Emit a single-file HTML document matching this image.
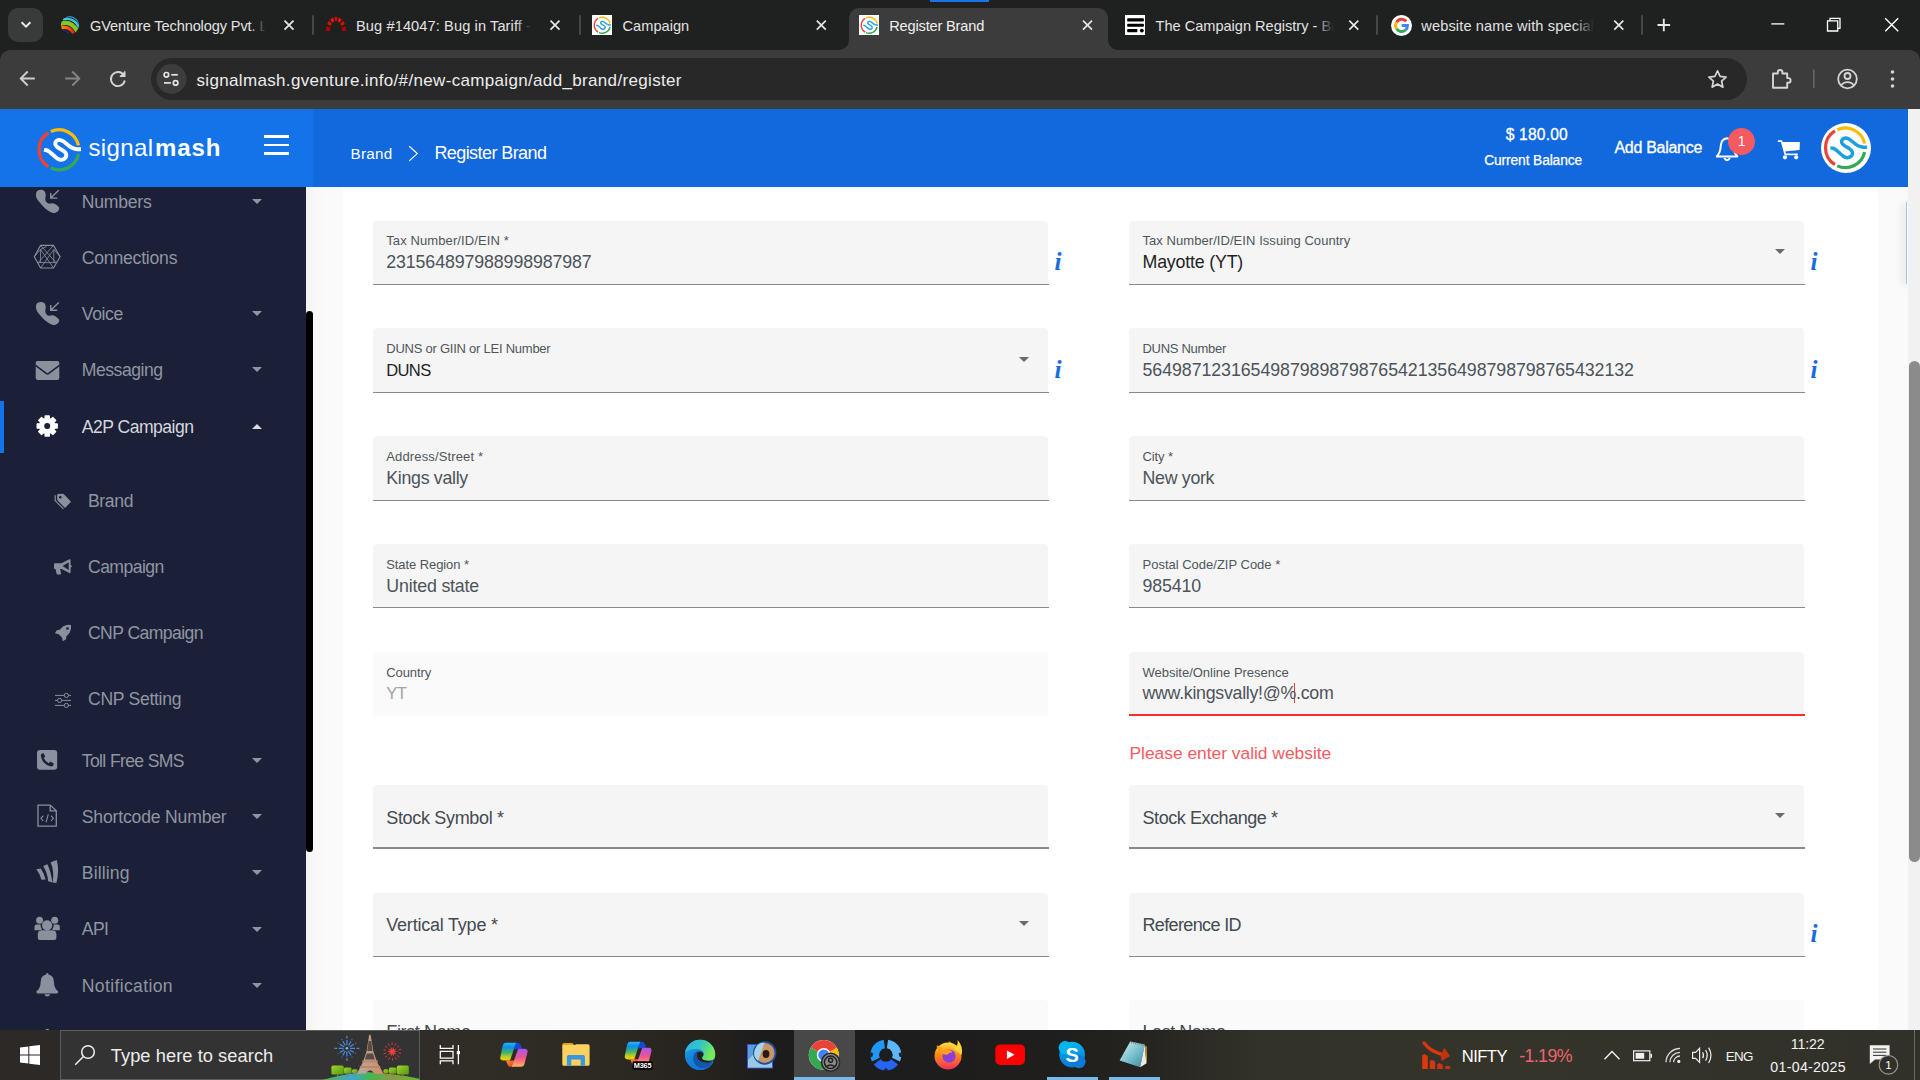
<!DOCTYPE html>
<html><head><meta charset="utf-8"><title>Register Brand</title>
<style>
*{box-sizing:border-box;margin:0;padding:0}
html,body{width:1920px;height:1080px;overflow:hidden;background:#fafafa;font-family:"Liberation Sans",sans-serif}
#root{position:relative;width:1920px;height:1080px;overflow:hidden}
#root>div,#root>svg,#root>span{position:absolute}
.tx{position:absolute;white-space:nowrap;line-height:1;display:block}
#tabbar{left:0;top:0;width:1920px;height:64px;background:#1f2020}
#toolbar{left:0;top:50px;width:1920px;height:58.5px;background:#3c3c3c;border-radius:10px 10px 0 0}
#acttab{left:849px;top:8px;width:258.5px;height:42px;background:#3c3c3c;border-radius:10px 10px 0 0}
.sep{top:14.5px;width:2px;height:20px;background:#474747;border-radius:1px}
#urlpill{left:151px;top:58px;width:1596px;height:42px;border-radius:21px;background:#282828}
#hdrL{left:0;top:108.5px;width:313px;height:78.5px;background:#1473e8}
#hdrR{left:313px;top:108.5px;width:1594.5px;height:78.5px;background:#1268dd}
#side{left:0;top:187px;width:306px;height:843px;background:#1b1f37}
#sidescroll{left:306px;top:187px;width:37px;height:843px;background:linear-gradient(90deg,#f1f1f1 0,#f8f8f8 8px,#fafafa 20px)}
#sidethumb{left:306.3px;top:311px;width:6.7px;height:541px;background:#000;border-radius:3.5px}
#actbar{left:0;top:401px;width:4px;height:51.5px;background:#1473e8}
.car{width:0;height:0;border-left:5.2px solid transparent;border-right:5.2px solid transparent;border-top:5.2px solid #8f96a1}
.car.up{border-top:0;border-bottom:5.2px solid #d8dadc}
#card{left:343px;top:187px;width:1535px;height:843px;background:#fff}
.f{width:675px;background:#f5f5f5;border-radius:4px 4px 0 0}
.f.dis{background:#fafafa}
.dd{width:0;height:0;border-left:5.9px solid transparent;border-right:5.9px solid transparent;border-top:5.9px solid #6a6a6a}
#rgutter{left:1878px;top:187px;width:29.5px;height:843px;background:#fafafa}
#pagescroll{left:1907.8px;top:108.5px;width:12.2px;height:921.5px;background:#f1f1f1}
#pagethumb{left:1908.9px;top:360.5px;width:11.5px;height:501.3px;background:#8b8b8b;border-radius:5.7px}
#task{left:0;top:1029.8px;width:1920px;height:50.2px;background:linear-gradient(90deg,#2d2927 0,#2e2a27 240px,#302d27 480px,#2c2923 620px,#25221e 715px,#1c1c1c 765px,#1d1d1d 900px,#1f1e1c 1050px,#262420 1150px,#32322a 1260px,#34342b 1500px,#31312a 1920px)}
#sbox{left:60px;top:1030.2px;width:359.8px;height:49.8px;background:#333;border:1.1px solid #5c5c5c}
#chromehl{left:794.3px;top:1030px;width:60.7px;height:50px;background:#484848}
.ul{top:1077px;height:3px;background:#76b9ed}
</style></head>
<body><div id="root">
<div id="tabbar"></div>
<div id="toolbar"></div>
<div id="acttab"></div>
<div id="urlpill"></div>
<div style="left:929.5px;top:0;width:59px;height:1.5px;background:#1a73e8"></div>
<div style="left:8px;top:8px;width:35px;height:34px;border-radius:10px;background:#393a3a"></div>
<svg style="left:19px;top:19px" width="14" height="12" viewBox="0 0 14 12"><path d="M2.6 3.2 L7 7.6 L11.4 3.2" fill="none" stroke="#e8e8e8" stroke-width="2"/></svg>
<!-- bottom outward curves of active tab -->
<svg style="left:839px;top:40px" width="10" height="10" viewBox="0 0 10 10"><path d="M10 0 V10 H0 A10 10 0 0 0 10 0Z" fill="#3c3c3c"/></svg>
<svg style="left:1107.5px;top:40px" width="10" height="10" viewBox="0 0 10 10"><path d="M0 0 V10 H10 A10 10 0 0 1 0 0Z" fill="#3c3c3c"/></svg>
<div class="sep" style="left:311.5px"></div><div class="sep" style="left:578.5px"></div><div class="sep" style="left:1376.3px"></div><div class="sep" style="left:1641.3px"></div>
<!-- close X -->
<svg style="left:0;top:0" width="1920" height="50" viewBox="0 0 1920 50"><g stroke="#e6e6e6" stroke-width="1.7" fill="none">
<path d="M284.5 20.7l9 9m0-9l-9 9"/><path d="M550.5 20.7l9 9m0-9l-9 9"/><path d="M816.8 20.7l9 9m0-9l-9 9"/><path d="M1083 20.7l9 9m0-9l-9 9"/><path d="M1349.3 20.7l9 9m0-9l-9 9"/><path d="M1614.3 20.7l9 9m0-9l-9 9"/>
<path d="M1657.5 25h12.6M1663.8 18.7v12.6" stroke-width="1.9"/>
<path d="M1771.3 23.9h13" stroke-width="1.3" stroke="#fff"/>
<path d="M1827.5 20.8h10.2v10.2h-10.2z M1830 20.6v-2.3h10v10h-2.2" stroke-width="1.3" stroke="#fff"/>
<path d="M1885.2 18.2l13 13m0-13l-13 13" stroke-width="1.4" stroke="#fff"/>
</g></svg>
<!-- favicons -->
<svg style="left:59.2px;top:14px" width="22" height="22" viewBox="-11 -11 22 22"><defs><clipPath id="gvc"><circle r="9"/></clipPath><linearGradient id="gvr" x1="0" y1="0" x2="1" y2="0"><stop offset="0" stop-color="#ff8a14"/><stop offset="1" stop-color="#f00a0a"/></linearGradient></defs>
<g clip-path="url(#gvc)" fill="none" transform="rotate(24)"><path d="M-7 -5.500 Q1 -11.500 9 -4" stroke="#2a9cc4" stroke-width="1.200"/><path d="M-9 -2 Q0 -9.500 10 -1" stroke="#3fc6ea" stroke-width="2.300"/><path d="M-9.500 3.500 Q-2 -5.500 10 3" stroke="#86c81e" stroke-width="4.200"/><path d="M-7 6.500 Q-1 0.500 9 7.200" stroke="url(#gvr)" stroke-width="3"/><path d="M-5 9 Q0 5.500 7 10" stroke="#1c2a78" stroke-width="1.500"/></g></svg>
<svg style="left:320px;top:12px" width="32" height="24" viewBox="320 12 32 24"><path d="M325.80 31.10 L326.51 25.89 L330.23 27.43 L329.80 31.10 Z" fill="#b40000"/><path d="M327.16 24.02 L329.07 20.68 L331.79 23.76 L330.63 26.11 Z" fill="#e00800"/><path d="M330.24 19.38 L333.01 17.52 L334.18 21.54 L332.50 22.85 Z" fill="#f21200"/><path d="M334.46 17.06 L337.54 17.06 L336.93 21.21 L335.07 21.21 Z" fill="#de0010"/><path d="M338.99 17.52 L341.76 19.38 L339.50 22.85 L337.82 21.54 Z" fill="#f21200"/><path d="M342.93 20.68 L344.84 24.02 L341.37 26.11 L340.21 23.76 Z" fill="#e00800"/><path d="M345.49 25.89 L346.20 31.10 L342.20 31.10 L341.77 27.43 Z" fill="#b40000"/></svg>
<svg style="left:591.8px;top:14.6px" width="20.5" height="20.5" viewBox="0 0 20.5 20.5"><rect width="20.5" height="20.5" rx="0.6" fill="#fff"/><g fill="none"><path d="M6.07 17.07 A8.00 8.00 0 0 1 6.07 3.43" stroke="#ea4335" stroke-width="1.40" stroke-linecap="butt"/><path d="M7.00 2.94 A8.00 8.00 0 0 1 18.06 8.52" stroke="#fbbc05" stroke-width="1.40" stroke-linecap="butt"/><path d="M7.00 17.56 A8.00 8.00 0 0 0 18.06 11.98" stroke="#34a853" stroke-width="1.40" stroke-linecap="butt"/><path d="M4.25 10.25 C4.45 10.29 5.05 10.32 5.45 10.49 C5.85 10.66 6.25 10.95 6.65 11.25 C7.05 11.55 7.45 11.94 7.85 12.29 C8.25 12.64 8.68 13.04 9.05 13.33 C9.42 13.62 9.73 13.86 10.05 14.01 C10.37 14.16 10.64 14.24 10.97 14.25 C11.30 14.26 11.74 14.20 12.05 14.05 C12.36 13.90 12.66 13.66 12.85 13.37 C13.04 13.08 13.18 12.66 13.17 12.33 C13.16 12.00 13.02 11.68 12.77 11.37 C12.52 11.06 12.00 10.70 11.65 10.45 C11.30 10.20 11.00 10.07 10.65 9.85 C10.30 9.63 9.86 9.38 9.57 9.13 C9.28 8.88 9.02 8.60 8.89 8.33 C8.76 8.06 8.72 7.79 8.77 7.53 C8.82 7.27 8.97 6.96 9.17 6.77 C9.37 6.58 9.69 6.44 9.97 6.37 C10.25 6.30 10.54 6.30 10.85 6.37 C11.16 6.44 11.48 6.59 11.85 6.81 C12.22 7.03 12.65 7.38 13.05 7.69 C13.45 8.00 13.85 8.36 14.25 8.65 C14.65 8.94 15.05 9.21 15.45 9.41 C15.85 9.61 16.25 9.75 16.65 9.85 C17.05 9.95 17.45 9.98 17.85 10.01 C18.25 10.04 18.85 10.04 19.05 10.05" stroke="#2ea3e0" stroke-width="1.50"/></g></svg>
<svg style="left:858.8px;top:14.6px" width="20.5" height="20.5" viewBox="0 0 20.5 20.5"><rect width="20.5" height="20.5" rx="0.6" fill="#fff"/><g fill="none"><path d="M6.07 17.07 A8.00 8.00 0 0 1 6.07 3.43" stroke="#ea4335" stroke-width="1.40" stroke-linecap="butt"/><path d="M7.00 2.94 A8.00 8.00 0 0 1 18.06 8.52" stroke="#fbbc05" stroke-width="1.40" stroke-linecap="butt"/><path d="M7.00 17.56 A8.00 8.00 0 0 0 18.06 11.98" stroke="#34a853" stroke-width="1.40" stroke-linecap="butt"/><path d="M4.25 10.25 C4.45 10.29 5.05 10.32 5.45 10.49 C5.85 10.66 6.25 10.95 6.65 11.25 C7.05 11.55 7.45 11.94 7.85 12.29 C8.25 12.64 8.68 13.04 9.05 13.33 C9.42 13.62 9.73 13.86 10.05 14.01 C10.37 14.16 10.64 14.24 10.97 14.25 C11.30 14.26 11.74 14.20 12.05 14.05 C12.36 13.90 12.66 13.66 12.85 13.37 C13.04 13.08 13.18 12.66 13.17 12.33 C13.16 12.00 13.02 11.68 12.77 11.37 C12.52 11.06 12.00 10.70 11.65 10.45 C11.30 10.20 11.00 10.07 10.65 9.85 C10.30 9.63 9.86 9.38 9.57 9.13 C9.28 8.88 9.02 8.60 8.89 8.33 C8.76 8.06 8.72 7.79 8.77 7.53 C8.82 7.27 8.97 6.96 9.17 6.77 C9.37 6.58 9.69 6.44 9.97 6.37 C10.25 6.30 10.54 6.30 10.85 6.37 C11.16 6.44 11.48 6.59 11.85 6.81 C12.22 7.03 12.65 7.38 13.05 7.69 C13.45 8.00 13.85 8.36 14.25 8.65 C14.65 8.94 15.05 9.21 15.45 9.41 C15.85 9.61 16.25 9.75 16.65 9.85 C17.05 9.95 17.45 9.98 17.85 10.01 C18.25 10.04 18.85 10.04 19.05 10.05" stroke="#2ea3e0" stroke-width="1.50"/></g></svg>
<svg style="left:1124.9px;top:14.9px" width="20.2" height="20.2" viewBox="0 0 20.2 20.2"><rect width="20.2" height="20.2" fill="#fff"/><g fill="#000"><rect x="2.2" y="3.3" width="16.700" height="3.300" rx=".8"/><rect x="2.2" y="8.700" width="16.700" height="3.100" rx=".8"/><rect x="2.2" y="14" width="10.200" height="3.200" rx=".8"/><circle cx="16.850" cy="15.600" r="1.950"/></g></svg>
<svg style="left:1390.5px;top:14.5px" width="21" height="21" viewBox="0 0 21 21"><circle cx="10.5" cy="10.5" r="10.5" fill="#fff"/>
<g fill="none" stroke-width="2.9"><path d="M15.3 6.3 A6 6 0 0 0 5.6 7.2" stroke="#ea4335"/><path d="M5.6 7.2 A6 6 0 0 0 5.6 13.8" stroke="#fbbc05"/><path d="M5.6 13.8 A6 6 0 0 0 14.6 15" stroke="#34a853"/><path d="M14.6 15 A6 6 0 0 0 16.5 10.5 H10.7" stroke="#4285f4"/></g></svg>
<!-- toolbar icons -->
<svg style="left:0;top:50px" width="1920" height="58" viewBox="0 50 1920 58"><g fill="none" stroke="#d5d5d5" stroke-width="1.9">
<path d="M34.800 78.500H21.300M27.700 71.500L20.700 78.500l7 7" stroke="#cdcdcd"/>
<path d="M65.200 78.500h13.500M72.300 71.500L79.300 78.500l-7 7" stroke="#858585"/>
<path d="M123.800 75.200 A7 7 0 1 0 124.800 80.500" /><path d="M124.800 71.200v5h-5" fill="#d5d5d5" stroke-width="1.4"/>
<path d="M1717.500 70.800l2.600 5.600 6 .7-4.500 4.100 1.300 6-5.400-3.100-5.400 3.100 1.300-6-4.500-4.100 6-.7z" stroke-width="1.7" stroke-linejoin="round"/>
<path d="M1773 73.500h4.800v-1.200a2.300 2.300 0 0 1 4.600 0v1.200h4.800v4.600h1.100a2.300 2.300 0 0 1 0 4.600h-1.100v5h-14.200z" stroke-width="1.9" stroke-linejoin="round"/>
<path d="M1813.800 69.500v18.500" stroke="#666" stroke-width="1.6"/>
<circle cx="1847.500" cy="79" r="9.300" stroke-width="1.8"/><circle cx="1847.500" cy="76" r="3" stroke-width="1.8"/><path d="M1841 85.600c1.500-2.400 3.800-3.400 6.500-3.400s5 1 6.500 3.400" stroke-width="1.8"/>
</g><g fill="#d5d5d5"><circle cx="1892.500" cy="72" r="1.800"/><circle cx="1892.500" cy="79" r="1.800"/><circle cx="1892.500" cy="86" r="1.800"/></g>
<circle cx="171.500" cy="79" r="15" fill="#3d3d3d"/>
<g fill="none" stroke="#e3e3e3" stroke-width="1.700"><circle cx="166.400" cy="74.800" r="2.300"/><path d="M171.300 74.800h6.500"/><circle cx="175.600" cy="82.900" r="2.300"/><path d="M164 82.900h6.900"/></g>
</svg>

<div id="hdrL"></div><div id="hdrR"></div>
<!-- logo -->
<svg style="left:30px;top:120px" width="60" height="60" viewBox="30 120 60 60"><g fill="none"><path d="M48.55 166.85 A20.00 20.00 0 0 1 48.55 132.75" stroke="#ea4335" stroke-width="3.30" stroke-linecap="butt"/><path d="M50.87 131.53 A20.00 20.00 0 0 1 78.53 145.47" stroke="#fbbc05" stroke-width="3.30" stroke-linecap="butt"/><path d="M50.87 168.07 A20.00 20.00 0 0 0 78.53 154.13" stroke="#34a853" stroke-width="3.30" stroke-linecap="butt"/><path d="M44.00 149.80 C44.50 149.90 46.00 149.98 47.00 150.40 C48.00 150.82 49.00 151.55 50.00 152.30 C51.00 153.05 52.00 154.03 53.00 154.90 C54.00 155.77 55.08 156.78 56.00 157.50 C56.92 158.22 57.70 158.82 58.50 159.20 C59.30 159.58 59.97 159.78 60.80 159.80 C61.63 159.82 62.72 159.67 63.50 159.30 C64.28 158.93 65.03 158.32 65.50 157.60 C65.97 156.88 66.33 155.83 66.30 155.00 C66.27 154.17 65.93 153.38 65.30 152.60 C64.67 151.82 63.38 150.93 62.50 150.30 C61.62 149.67 60.87 149.35 60.00 148.80 C59.13 148.25 58.03 147.63 57.30 147.00 C56.57 146.37 55.93 145.67 55.60 145.00 C55.27 144.33 55.18 143.65 55.30 143.00 C55.42 142.35 55.80 141.58 56.30 141.10 C56.80 140.62 57.60 140.27 58.30 140.10 C59.00 139.93 59.72 139.92 60.50 140.10 C61.28 140.28 62.08 140.65 63.00 141.20 C63.92 141.75 65.00 142.63 66.00 143.40 C67.00 144.17 68.00 145.08 69.00 145.80 C70.00 146.52 71.00 147.20 72.00 147.70 C73.00 148.20 74.00 148.55 75.00 148.80 C76.00 149.05 77.00 149.12 78.00 149.20 C79.00 149.28 80.50 149.28 81.00 149.30" stroke="#fff" stroke-width="3.90"/></g></svg>
<div style="left:264.2px;top:135px;width:25px;height:2.900px;background:#fff"></div>
<div style="left:264.2px;top:143.600px;width:25px;height:2.900px;background:#fff"></div>
<div style="left:264.2px;top:152.200px;width:25px;height:2.900px;background:#fff"></div>
<svg style="left:406px;top:144px" width="14" height="20" viewBox="0 0 14 20"><path d="M3.200 2.300 L11.300 9.600 L3.200 16.900" fill="none" stroke="#fff" stroke-width="1.150"/></svg>
<!-- bell -->
<svg style="left:1710px;top:132px" width="34" height="34" viewBox="1710 132 34 34"><path d="M1727 138.300 Q1721.300 139 1720.700 146 Q1720.500 152.500 1716.800 156.400 H1737.400 Q1733.600 152.500 1733.400 146 Q1732.800 139 1727 138.300Z" fill="none" stroke="#fff" stroke-width="2" stroke-linejoin="round"/><path d="M1724.200 158 Q1727 162.400 1729.900 158" fill="none" stroke="#fff" stroke-width="2"/></svg>
<div style="left:1728.200px;top:127.800px;width:27px;height:27px;border-radius:50%;background:#f45a5f"></div>
<!-- cart -->
<svg style="left:1770px;top:132px" width="40" height="34" viewBox="1770 132 40 34"><path d="M1777.800 141.200 H1781.600 L1785.200 154.400 H1797.800" fill="none" stroke="#fff" stroke-width="1.700" stroke-linejoin="round"/><path d="M1782 142.100 H1799.900 L1799.600 149.900 L1784.500 151.600Z" fill="#fff"/><circle cx="1785" cy="157.300" r="2.100" fill="#fff"/><circle cx="1796.200" cy="157.300" r="2.100" fill="#fff"/></svg>
<!-- avatar -->
<div style="left:1820.8px;top:122.8px;width:50.2px;height:50.2px;border-radius:50%;background:#fff"></div>
<svg style="left:1816px;top:117.7px" width="60" height="60" viewBox="1816 117.7 60 60"><g fill="none"><path d="M1834.95 164.38 A19.80 19.80 0 0 1 1834.95 130.62" stroke="#ea4335" stroke-width="3.20" stroke-linecap="butt"/><path d="M1837.25 129.41 A19.80 19.80 0 0 1 1864.63 143.21" stroke="#fbbc05" stroke-width="3.20" stroke-linecap="butt"/><path d="M1837.25 165.59 A19.80 19.80 0 0 0 1864.63 151.79" stroke="#34a853" stroke-width="3.20" stroke-linecap="butt"/><path d="M1830.45 147.50 C1830.94 147.60 1832.43 147.68 1833.42 148.09 C1834.41 148.51 1835.40 149.23 1836.39 149.97 C1837.38 150.72 1838.37 151.69 1839.36 152.55 C1840.35 153.41 1841.42 154.41 1842.33 155.12 C1843.24 155.83 1844.01 156.43 1844.81 156.81 C1845.60 157.19 1846.26 157.38 1847.08 157.40 C1847.91 157.42 1848.98 157.27 1849.75 156.91 C1850.53 156.54 1851.27 155.93 1851.73 155.22 C1852.20 154.51 1852.56 153.47 1852.53 152.65 C1852.49 151.82 1852.16 151.05 1851.54 150.27 C1850.91 149.50 1849.64 148.62 1848.76 148.00 C1847.89 147.37 1847.15 147.05 1846.29 146.51 C1845.43 145.97 1844.34 145.35 1843.62 144.73 C1842.89 144.10 1842.26 143.41 1841.93 142.75 C1841.60 142.09 1841.52 141.41 1841.64 140.77 C1841.75 140.12 1842.13 139.37 1842.63 138.89 C1843.12 138.41 1843.91 138.06 1844.61 137.90 C1845.30 137.73 1846.01 137.72 1846.78 137.90 C1847.56 138.08 1848.35 138.44 1849.26 138.99 C1850.17 139.53 1851.24 140.40 1852.23 141.16 C1853.22 141.92 1854.21 142.83 1855.20 143.54 C1856.19 144.25 1857.18 144.93 1858.17 145.42 C1859.16 145.92 1860.15 146.26 1861.14 146.51 C1862.13 146.76 1863.12 146.82 1864.11 146.91 C1865.10 146.99 1866.59 146.99 1867.08 147.00" stroke="#1ba1dc" stroke-width="3.50"/></g></svg>

<div id="side"></div><div id="sidescroll"></div><div id="sidethumb"></div><div id="actbar"></div>
<div class="car" style="left:251.8px;top:198.8px"></div>
<div class="car" style="left:251.8px;top:310.9px"></div>
<div class="car" style="left:251.8px;top:367.4px"></div>
<div class="car" style="left:251.8px;top:757.9px"></div>
<div class="car" style="left:251.8px;top:814.1px"></div>
<div class="car" style="left:251.8px;top:870.4px"></div>
<div class="car" style="left:251.8px;top:926.6px"></div>
<div class="car" style="left:251.8px;top:982.9px"></div>
<div class="car up" style="left:251.8px;top:424.3px"></div><!--ICONS-->
<svg style="left:0;top:187px" width="80" height="843" viewBox="0 187 80 843">
<path d="M35.90 195.50 C36.05 194.83 36.03 192.45 36.80 191.50 C37.57 190.55 39.25 189.88 40.50 189.80 C41.75 189.72 43.43 190.22 44.30 191.00 C45.17 191.78 45.53 193.13 45.70 194.50 C45.87 195.87 45.22 197.98 45.30 199.20 C45.38 200.42 45.62 201.07 46.20 201.80 C46.78 202.53 47.73 203.37 48.80 203.60 C49.87 203.83 51.35 203.00 52.60 203.20 C53.85 203.40 55.20 204.03 56.30 204.80 C57.40 205.57 58.92 206.77 59.20 207.80 C59.48 208.83 58.77 210.15 58.00 211.00 C57.23 211.85 55.87 212.73 54.60 212.90 C53.33 213.07 51.95 212.73 50.40 212.00 C48.85 211.27 46.93 209.90 45.30 208.50 C43.67 207.10 41.95 205.13 40.60 203.60 C39.25 202.07 37.98 200.65 37.20 199.30 C36.42 197.95 36.12 196.13 35.90 195.50Z" fill="#8a919c"/><path d="M58.8 190.3 L50.7 198.1 M50.7 192.9 V198.1 H57.3" fill="none" stroke="#8a919c" stroke-width="1.4"/>
<path d="M35.90 307.60 C36.05 306.93 36.03 304.55 36.80 303.60 C37.57 302.65 39.25 301.98 40.50 301.90 C41.75 301.82 43.43 302.32 44.30 303.10 C45.17 303.88 45.53 305.23 45.70 306.60 C45.87 307.97 45.22 310.08 45.30 311.30 C45.38 312.52 45.62 313.17 46.20 313.90 C46.78 314.63 47.73 315.47 48.80 315.70 C49.87 315.93 51.35 315.10 52.60 315.30 C53.85 315.50 55.20 316.13 56.30 316.90 C57.40 317.67 58.92 318.87 59.20 319.90 C59.48 320.93 58.77 322.25 58.00 323.10 C57.23 323.95 55.87 324.83 54.60 325.00 C53.33 325.17 51.95 324.83 50.40 324.10 C48.85 323.37 46.93 322.00 45.30 320.60 C43.67 319.20 41.95 317.23 40.60 315.70 C39.25 314.17 37.98 312.75 37.20 311.40 C36.42 310.05 36.12 308.23 35.90 307.60Z" fill="#8a919c"/><path d="M58.8 302.4 L50.7 310.2 M50.7 305.0 V310.2 H57.3" fill="none" stroke="#8a919c" stroke-width="1.4"/>
<g fill="none" stroke="#8a919c" stroke-width="0.85">
<path d="M34.3 256.7 L40.6 245.4 L53.5 245.4 L60.1 256.7 L53.5 268.0 L40.6 268.0Z" stroke-width="1.1"/>
<path d="M40.6 245.4 L56 262.6 M53.5 245.4 L38.2 262.6 M38.2 262.6 H56 M40.6 249.5 V262.6 M40.6 249.5 L53.5 268 M53.8 249.5 L40.6 268 M40.6 249.5 L46.5 246.5 M34.3 256.7 L40.6 249.5 M60.1 256.7 L53.8 249.5 M53.8 249.5 V262.6"/>
</g>
<rect x="35.7" y="361" width="23.6" height="18.9" rx="1.8" fill="#8a919c"/>
<path d="M35.2 365.2 L46.2 373.4 Q47.5 374.4 48.8 373.4 L59.8 365.2" fill="none" stroke="#1b1f37" stroke-width="1.5"/>
<path d="M54.46 423.75 L57.29 423.95 L57.29 428.05 L54.46 428.25 L53.92 429.55 L55.78 431.69 L52.89 434.58 L50.75 432.72 L49.45 433.26 L49.25 436.09 L45.15 436.09 L44.95 433.26 L43.65 432.72 L41.51 434.58 L38.62 431.69 L40.48 429.55 L39.94 428.25 L37.11 428.05 L37.11 423.95 L39.94 423.75 L40.48 422.45 L38.62 420.31 L41.51 417.42 L43.65 419.28 L44.95 418.74 L45.15 415.91 L49.25 415.91 L49.45 418.74 L50.75 419.28 L52.89 417.42 L55.78 420.31 L53.92 422.45Z M47.20 423.00 a3 3 0 1 0 0.01 0Z" fill="#fff" fill-rule="evenodd" stroke="#fff" stroke-width="1.2" stroke-linejoin="round"/>
<circle cx="47.2" cy="426.0" r="3" fill="#1b1f37"/>
<path d="M57.2 494.6 Q57.2 494 57.8 494 L62.8 493.8 Q63.4 493.8 63.9 494.3 L70.6 501.2 Q71.1 501.8 70.6 502.3 L65.5 507.4 Q65 507.9 64.5 507.4 L57.6 500.4 Q57.2 500 57.2 499.4Z" fill="#8a919c"/>
<circle cx="60.3" cy="497.2" r="1.3" fill="#1b1f37"/>
<path d="M55.2 495.2 V500.6 L63.4 508.8" fill="none" stroke="#8a919c" stroke-width="1.2"/>
<path d="M54 564.2 Q54 563.2 55 563.2 H61.5 L69.3 559.3 Q70.6 558.8 70.6 560.2 V565 Q71.8 565.3 71.8 566.3 Q71.8 567.3 70.6 567.6 V572.2 Q70.6 573.6 69.3 573 L61.5 569 H60.2 L61 573.4 Q61.2 574.6 60 574.6 H57.6 Q56.7 574.6 56.5 573.6 L55.6 569 H55 Q54 569 54 568Z" fill="#8a919c"/>
<path d="M62.6 566.1 L68.7 562.3 V569.9Z" fill="#1b1f37"/>
<path d="M71 625 Q71.6 629.5 69.5 633 L66.3 636.4 L66 639.3 L62.8 641.2 L62 637.6 L58.6 634.2 L54.9 633.3 L56.8 630.2 L59.7 629.8 L63 626.4 Q66.5 624.4 71 625Z" fill="#8a919c"/>
<circle cx="67.5" cy="628.5" r="1.35" fill="#1b1f37"/>
<g stroke="#8a919c" stroke-width="1" fill="#1b1f37"><path d="M55 695.4 H71 M55 700.4 H71 M55 705.4 H71"/><circle cx="66.4" cy="695.4" r="2.1"/><circle cx="59.6" cy="700.4" r="2.1"/><circle cx="66.4" cy="705.4" r="2.1"/></g>
<rect x="37" y="750" width="20.2" height="19.8" rx="3" fill="#8a919c"/>
<path d="M41.6 753.8 L43.6 753.2 L45.2 756.6 L43.8 758 Q45 761.4 48.8 763.2 L50.3 761.6 L53.8 763.4 L53.2 765.6 Q52.6 766.6 51 766.4 Q42.4 764.6 40.9 756 Q40.7 754.4 41.6 753.8Z" fill="#1b1f37"/>
<g fill="none" stroke="#8a919c" stroke-width="1.3"><path d="M38 805.1 H50.2 L56.3 810.9 V826.1 H38Z"/><path d="M50.2 805.1 V810.9 H56.3"/><path d="M43.3 815.6 L40.9 818.3 L43.3 821 M51 815.6 L53.4 818.3 L51 821 M48.3 814.4 L46 822.3" stroke-width="1.1"/></g>
<g fill="#8a919c"><path d="M36.3 869.2 L40.8 868.4 Q44 873 45.6 879.4 L41.4 879.8 Q40 873.6 36.3 869.2Z"/><path d="M43.2 866 L47.4 864.2 Q51 871.6 52.4 882.6 L48.2 881.2 Q47.4 873 43.2 866Z"/><path d="M50.6 862.2 L56.8 860 Q59.6 871 56.4 883 L52.6 882.6 Q54.6 871 50.6 862.2Z"/></g>
<g fill="#8a919c"><circle cx="39.6" cy="920.3" r="3.5"/><circle cx="54.7" cy="920.3" r="3.5"/><path d="M34.5 930.3 V926.6 Q34.5 924.4 36.8 924.4 H40.6 Q40.2 927.4 42.2 929.6 Q40 930 39 930.3Z"/><path d="M59.8 930.3 V926.6 Q59.8 924.4 57.5 924.4 H53.7 Q54.1 927.4 52.1 929.6 Q54.3 930 55.3 930.3Z"/><circle cx="47.1" cy="925.4" r="5.1"/><path d="M37.8 938 V934.2 Q37.8 930.2 42 930.2 H52.2 Q56.4 930.2 56.4 934.2 V938 Q56.4 940 54.4 940 H39.8 Q37.8 940 37.8 938Z"/></g>
<path d="M47.3 973 Q48.4 973 48.5 974.4 Q54 975.6 54 982.4 Q54 988 57.8 991 Q58.6 991.8 58.2 992.6 Q57.8 993.4 56.8 993.4 H37.8 Q36.8 993.4 36.4 992.6 Q36 991.8 36.8 991 Q40.6 988 40.6 982.4 Q40.6 975.6 46.1 974.4 Q46.2 973 47.3 973Z M44.5 994.2 H50.1 Q49.8 996.4 47.3 996.4 Q44.8 996.4 44.5 994.2Z" fill="#8a919c"/>
<path d="M45.8 1029 h3 v1 h-3z" fill="#8a919c"/>
</svg>
<div id="card"></div><div id="rgutter"></div>
<div class="f" style="left:373px;top:220.90px;height:62.90px"></div>
<div style="left:373px;top:283.80px;width:676.1px;height:1.2px;background:#8a8a8a"></div>
<div class="f" style="left:1129px;top:220.90px;height:62.90px"></div>
<div style="left:1129px;top:283.80px;width:676.1px;height:1.2px;background:#8a8a8a"></div>
<div class="f" style="left:373px;top:327.90px;height:63.90px"></div>
<div style="left:373px;top:391.80px;width:676.1px;height:1.2px;background:#8a8a8a"></div>
<div class="f" style="left:1129px;top:327.90px;height:63.90px"></div>
<div style="left:1129px;top:391.80px;width:676.1px;height:1.2px;background:#8a8a8a"></div>
<div class="f" style="left:373px;top:436.20px;height:63.70px"></div>
<div style="left:373px;top:499.90px;width:676.1px;height:1.2px;background:#8a8a8a"></div>
<div class="f" style="left:1129px;top:436.20px;height:63.70px"></div>
<div style="left:1129px;top:499.90px;width:676.1px;height:1.2px;background:#8a8a8a"></div>
<div class="f" style="left:373px;top:544.20px;height:62.60px"></div>
<div style="left:373px;top:606.80px;width:676.1px;height:1.2px;background:#8a8a8a"></div>
<div class="f" style="left:1129px;top:544.20px;height:62.60px"></div>
<div style="left:1129px;top:606.80px;width:676.1px;height:1.2px;background:#8a8a8a"></div>
<div class="f dis" style="left:373px;top:652.00px;height:64.00px"></div>
<div class="f" style="left:1129px;top:652.00px;height:61.90px"></div>
<div style="left:1129px;top:713.90px;width:676.1px;height:2.1px;background:#f3302a"></div>
<div class="f" style="left:373px;top:785.00px;height:62.40px"></div>
<div style="left:373px;top:847.40px;width:676.1px;height:1.2px;background:#8a8a8a"></div>
<div class="f" style="left:1129px;top:785.00px;height:62.40px"></div>
<div style="left:1129px;top:847.40px;width:676.1px;height:1.2px;background:#8a8a8a"></div>
<div class="f" style="left:373px;top:893.00px;height:62.65px"></div>
<div style="left:373px;top:955.65px;width:676.1px;height:1.2px;background:#8a8a8a"></div>
<div class="f" style="left:1129px;top:893.00px;height:62.65px"></div>
<div style="left:1129px;top:955.65px;width:676.1px;height:1.2px;background:#8a8a8a"></div>
<div class="f dis" style="left:373px;top:1000.30px;height:64.20px"></div>
<div class="f dis" style="left:1129px;top:1000.30px;height:64.20px"></div>
<div class="dd" style="left:1774.9px;top:248.8px"></div>
<div class="dd" style="left:1018.9px;top:356.8px"></div>
<div class="dd" style="left:1774.9px;top:813.3px"></div>
<div class="dd" style="left:1018.9px;top:921.3px"></div>
<div style="left:1294.2px;top:683.2px;width:1.2px;height:19.6px;background:#e53935"></div>
<div style="left:1905.8px;top:202px;width:4px;height:81.5px;background:#fff;border-left:1.4px solid #a8c3ee;box-shadow:-3px 1px 8px rgba(0,0,0,.13)"></div>
<div id="pagescroll"></div><div id="pagethumb"></div>
<div id="task"></div><div id="sbox"></div><div id="chromehl"></div>
<div class="ul" style="left:794.3px;width:60.7px"></div><div class="ul" style="left:1047.1px;width:51px"></div><div class="ul" style="left:1109px;width:51px"></div>
<div style="left:1913.5px;top:1030px;width:1px;height:50px;background:#6a6a6a"></div>
<svg style="left:0;top:1030px" width="1920" height="50" viewBox="0 1030 1920 50">
<defs><linearGradient id="gcl" x1="0" y1="0" x2="0" y2="1"><stop offset="0" stop-color="#22b6ff"/><stop offset=".25" stop-color="#0c8ee6"/><stop offset=".55" stop-color="#3fb56c"/><stop offset=".8" stop-color="#c4cc22"/><stop offset="1" stop-color="#f7d000"/></linearGradient><linearGradient id="gcr" x1="0" y1="0" x2="0" y2="1"><stop offset="0" stop-color="#a656f2"/><stop offset=".5" stop-color="#f0548e"/><stop offset="1" stop-color="#ffb456"/></linearGradient><linearGradient id="ged" x1="0" y1="1" x2="1" y2="0"><stop offset="0" stop-color="#0c59a4"/><stop offset=".45" stop-color="#1b9de2"/><stop offset=".75" stop-color="#35c1c4"/><stop offset="1" stop-color="#7be05a"/></linearGradient><linearGradient id="gsk" x1="0" y1="0" x2="0" y2="1"><stop offset="0" stop-color="#00b7f0"/><stop offset="1" stop-color="#0b78d6"/></linearGradient><linearGradient id="gff" x1="0" y1="0" x2="0" y2="1"><stop offset="0" stop-color="#ffdc3e"/><stop offset=".45" stop-color="#ff8a16"/><stop offset="1" stop-color="#f0305e"/></linearGradient><linearGradient id="gtw" x1="0" y1="0" x2="1" y2="0"><stop offset="0" stop-color="#b7aaa0"/><stop offset="1" stop-color="#d08a68"/></linearGradient><linearGradient id="ghill" x1="0" y1="0" x2="1" y2="0"><stop offset="0" stop-color="#5ab52e"/><stop offset=".3" stop-color="#3ea6d6"/><stop offset=".5" stop-color="#45b84a"/><stop offset=".7" stop-color="#8a9a4a"/><stop offset="1" stop-color="#63b82a"/></linearGradient><linearGradient id="gtree" x1="0" y1="0" x2="1" y2="1"><stop offset="0" stop-color="#a6d32a"/><stop offset="1" stop-color="#4f9a14"/></linearGradient><linearGradient id="gnp" x1="0" y1="0" x2="1" y2="1"><stop offset="0" stop-color="#d8f0f4"/><stop offset=".5" stop-color="#7ec4d0"/><stop offset="1" stop-color="#3a8a9a"/></linearGradient><linearGradient id="geb" x1="0" y1="0" x2=".6" y2="1"><stop offset="0" stop-color="#2bb0ee"/><stop offset=".5" stop-color="#1485dc"/><stop offset="1" stop-color="#0d74d6"/></linearGradient><linearGradient id="gec" x1="0" y1="0" x2="1" y2=".35"><stop offset="0" stop-color="#2db2f2"/><stop offset=".5" stop-color="#30c4c8"/><stop offset="1" stop-color="#78ea54"/></linearGradient><linearGradient id="gco" x1="0" y1="0" x2="1" y2="1"><stop offset="0" stop-color="#ff8a3a"/><stop offset="1" stop-color="#e4372a"/></linearGradient></defs>
<g fill="#fff"><path d="M20 1047.6 L28.300 1046.500 V1054.500 H20Z"/><path d="M29.300 1046.350 L40 1044.900 V1054.500 H29.300Z"/><path d="M20 1055.500 H28.300 V1063.500 L20 1062.400Z"/><path d="M29.300 1055.500 H40 V1065.100 L29.300 1063.650Z"/></g>
<g fill="none" stroke="#f0f0f0" stroke-width="1.500"><circle cx="88" cy="1052" r="6.300"/><path d="M83.500 1056.500 L75.200 1064.800"/></g>
<path d="M322 1080 Q345 1073.500 366 1072 Q395 1073.500 419.500 1078.700 V1080Z" fill="url(#ghill)"/>
<path d="M350.10 1048.30 L359.50 1048.30 M349.67 1049.90 L355.99 1053.55 M348.50 1051.07 L352.15 1057.39 M346.90 1051.50 L346.90 1060.90 M345.30 1051.07 L341.65 1057.39 M344.13 1049.90 L337.81 1053.55 M343.70 1048.30 L334.30 1048.30 M344.13 1046.70 L337.81 1043.05 M345.30 1045.53 L341.65 1039.21 M346.90 1045.10 L346.90 1035.70 M348.50 1045.53 L352.15 1039.21 M349.67 1046.70 L355.99 1043.05" stroke="#4a8ae0" stroke-width="1.200" stroke-dasharray="5 1.500 3 1.500" fill="none"/>
<circle cx="346.9" cy="1048.3" r="1.300" fill="#8ab4f0"/>
<path d="M397.80 1051.60 L394.58 1052.34 L396.75 1054.83 L393.71 1053.54 L394.00 1056.83 L392.30 1054.00 L390.60 1056.83 L390.89 1053.54 L387.85 1054.83 L390.02 1052.34 L386.80 1051.60 L390.02 1050.86 L387.85 1048.37 L390.89 1049.66 L390.60 1046.37 L392.30 1049.20 L394.00 1046.37 L393.71 1049.66 L396.75 1048.37 L394.58 1050.86 Z" fill="#f23c3c"/>
<path d="M398.67 1052.89 L401.12 1053.39 M397.48 1055.53 L399.47 1057.04 M395.26 1057.39 L396.40 1059.61 M392.46 1058.10 L392.52 1060.60 M389.62 1057.52 L388.59 1059.80 M387.32 1055.78 L385.40 1057.38 M386.00 1053.20 L383.58 1053.82 M385.93 1050.31 L383.48 1049.81 M387.12 1047.67 L385.13 1046.16 M389.34 1045.81 L388.20 1043.59 M392.14 1045.10 L392.08 1042.60 M394.98 1045.68 L396.01 1043.40 M397.28 1047.42 L399.20 1045.82 M398.60 1050.00 L401.02 1049.38" stroke="#e83434" stroke-width="1" fill="none"/>
<path d="M369.200 1034.700 H370.600 L373.500 1052 L377.300 1062.500 L383.600 1073.800 H374.600 Q370 1066.500 365.600 1073.800 H356.800 L362.800 1062.500 L366.400 1052Z" fill="url(#gtw)"/>
<path d="M368.600 1041 H371.200 L372.600 1051 H367.200Z M366.800 1053.500 H373 L374.800 1059.500 H364.800Z" fill="#323232" opacity=".75"/>
<path d="M362.200 1060.600 H377.800 V1062.400 H362.200Z M359.800 1066 H380.200 V1068 H359.800Z" fill="#b98a6a"/>
<rect x="331.4" y="1065.6" width="12.4" height="8.9" rx="1.600" fill="url(#gtree)"/>
<rect x="337.0" y="1074.5" width="1.300" height="2.600" fill="#b5733a"/>
<rect x="344.0" y="1067.5" width="7.6" height="6.3" rx="1.600" fill="url(#gtree)"/>
<rect x="347.2" y="1073.8" width="1.300" height="2.600" fill="#b5733a"/>
<rect x="352.0" y="1069.3" width="5.6" height="3.9" rx="1.600" fill="url(#gtree)"/>
<rect x="354.2" y="1073.2" width="1.300" height="2.600" fill="#b5733a"/>
<rect x="396.8" y="1065.6" width="12.0" height="8.9" rx="1.600" fill="url(#gtree)"/>
<rect x="402.2" y="1074.5" width="1.300" height="2.600" fill="#b5733a"/>
<rect x="389.0" y="1067.5" width="7.6" height="6.3" rx="1.600" fill="url(#gtree)"/>
<rect x="392.2" y="1073.8" width="1.300" height="2.600" fill="#b5733a"/>
<rect x="383.4" y="1069.3" width="5.4" height="3.9" rx="1.600" fill="url(#gtree)"/>
<rect x="385.5" y="1073.2" width="1.300" height="2.600" fill="#b5733a"/>
<g fill="none" stroke="#fff" stroke-width="1.250"><path d="M440.300 1045 V1048.400 H453 V1045 M440.300 1051.300 H453 V1058.100 H440.300Z M440.300 1064.200 V1060.800 H453 V1064.200 M458.400 1045 V1064.200"/></g><rect x="456.800" y="1051" width="3.200" height="3.200" fill="#fff"/>
<g transform="translate(514.0 1054.7) scale(1.000)"><path d="M0 -12 H3.500 Q6.300 -12 7 -9.500 L7.900 -6.300 L0.500 -5.500Z" fill="#1648d4"/><path d="M-8 6 L-6.300 10.300 Q-5.500 12 -3.500 12 H-1 L1 5.800Z" fill="url(#gco)"/><path d="M-8 -12 H2 L-4 5.900 H-10.600 Q-14.600 5.900 -13.600 2 L-11.400 -8.600 Q-10.600 -12 -8 -12Z" fill="url(#gcl)"/><path d="M4.200 -5.900 H10.600 Q14.400 -5.900 13.400 -2 L10.600 8.800 Q9.800 12 7 12 H-2.200 Z" fill="url(#gcr)"/></g>
<g transform="translate(638.2 1053.6) scale(0.980)"><path d="M0 -12 H3.500 Q6.300 -12 7 -9.500 L7.900 -6.300 L0.500 -5.500Z" fill="#1648d4"/><path d="M-8 6 L-6.300 10.300 Q-5.500 12 -3.500 12 H-1 L1 5.800Z" fill="url(#gco)"/><path d="M-8 -12 H2 L-4 5.900 H-10.600 Q-14.600 5.900 -13.600 2 L-11.400 -8.600 Q-10.600 -12 -8 -12Z" fill="url(#gcl)"/><path d="M4.200 -5.900 H10.600 Q14.400 -5.900 13.400 -2 L10.600 8.800 Q9.800 12 7 12 H-2.200 Z" fill="url(#gcr)"/></g>
<rect x="632.500" y="1061.300" width="20.200" height="8.400" rx="1.500" fill="#000"/>
<path d="M562.300 1044.600 Q562.300 1043 563.900 1043 H572.300 L574.300 1045 H562.300Z" fill="#e6a400"/>
<path d="M562.300 1045 H574.800 L576.300 1044.200 H588 Q589.600 1044.200 589.600 1045.800 V1064.200 Q589.600 1065.800 588 1065.800 H563.900 Q562.300 1065.800 562.300 1064.200Z" fill="#fbd260"/>
<path d="M566.900 1065.800 V1057 Q566.900 1055 568.900 1055 H583 Q585 1055 585 1057 V1065.800 H580.600 V1059.500 H571.300 V1065.800Z" fill="#3a96de"/>
<g transform="translate(700.1 1054.9)">
<circle r="15.200" fill="url(#geb)"/>
<path d="M-15 -2.500 A15.200 15.200 0 0 1 15.100 -1.500 Q15.300 3 12.500 5.300 Q7.500 6.600 3.500 5.200 Q1.500 4 1.900 2.300 Q4.300 0.300 3.600 -2.300 Q2 -5.200 -1.600 -5.800 Q-9.500 -6.800 -15 -2.500Z" fill="url(#gec)"/>
<path d="M-6.600 0.600 Q-5 -3.500 -1.500 -3.600 Q-3.600 -0.500 -2.300 3 Q0.500 8.600 7.500 8 Q10.800 7.600 12.800 6.200 Q11.500 10.500 7 12.500 Q0.500 14.600 -4 10.500 Q-8.200 6 -6.600 0.600Z" fill="#1258a6"/>
<path d="M-3.300 0 Q-3.200 -3.300 0.200 -3.500 Q3.200 -3 3.400 -0.300 Q3.300 1.300 1.900 2.300 Q1.500 4 3.500 5.200 Q7.500 6.600 12.500 5.300 Q11.500 6.800 9.500 7.500 Q3 8.800 -1.300 5 Q-3.300 2.600 -3.300 0Z" fill="#25221e"/><path d="M12.500 5.300 L16 3.600 L16 8.200 Q14 7.600 12.800 6.200Z" fill="#25221e"/>
</g>
<rect x="747.500" y="1044.500" width="25" height="23.500" fill="#5aa0dc" stroke="#3b4fd8" stroke-width="1"/>
<path d="M748 1060 L756 1052 L764 1060 L772 1054 V1067.500 H748Z" fill="#9ac8e8"/>
<circle cx="764.700" cy="1053" r="10.800" fill="#c9956a" stroke="#1f4f9a" stroke-width="1.800"/>
<path d="M764.700 1042.600 A10.400 10.400 0 0 0 758 1061 Q761 1052 764.700 1042.600Z" fill="#a8d4ea"/>
<ellipse cx="766" cy="1054" rx="3.400" ry="4" fill="#2a1a12"/>
<circle cx="823.75" cy="1055.00" r="15" fill="#fff"/>
<path d="M823.75 1055.00 L810.76 1047.50 A15.0 15.0 0 0 1 836.74 1047.50 Z" fill="#ea4335"/>
<path d="M823.75 1055.00 L836.74 1047.50 A15.0 15.0 0 0 1 823.75 1070.00 Z" fill="#fbbc05"/>
<path d="M823.75 1055.00 L823.75 1070.00 A15.0 15.0 0 0 1 810.76 1047.50 Z" fill="#34a853"/>
<path d="M823.75 1055.00 L836.74 1047.50 L830.75 1047.50 Z" fill="#ea4335"/>
<circle cx="823.75" cy="1055.00" r="7" fill="#fff"/><circle cx="823.75" cy="1055.00" r="5.500" fill="#4285f4"/>
<circle cx="830.600" cy="1062.300" r="9" fill="#8a8a8a" stroke="#2a2a2a" stroke-width="1.600"/>
<g fill="none" stroke="#1f1f1f" stroke-width="1.500"><circle cx="830.600" cy="1062.300" r="6.200"/><circle cx="830.600" cy="1060.300" r="2"/><path d="M826.400 1066.600 Q830.600 1063.200 834.800 1066.600"/></g>
<path d="M871.85 1061.55 A15.5 15.5 0 0 1 883.74 1039.65 L884.95 1048.27 A6.8 6.8 0 0 0 879.74 1057.87 Z" fill="#2196f3"/>
<path d="M888.06 1039.65 A15.5 15.5 0 0 1 899.95 1061.55 L892.06 1057.87 A6.8 6.8 0 0 0 886.85 1048.27 Z" fill="#5cb6fa"/>
<path d="M898.11 1064.54 A15.5 15.5 0 0 1 873.69 1064.54 L880.54 1059.19 A6.8 6.8 0 0 0 891.26 1059.19 Z" fill="#2465f2"/>
<path d="M883.1 1070.8 l2.800 -3 l2.800 3z" fill="#1f2020"/>
<path d="M870.500 1052 l2.600 1.500 l-0.600 3 l-2.500 1z M901.300 1052 l-2.600 1.500 l0.600 3 l2.500 1z" fill="#1f2020"/>
<circle cx="948" cy="1056" r="13.500" fill="url(#gff)"/>
<path d="M948.500 1041 Q953 1043 954.500 1047.500 Q958.500 1045.500 957.500 1040 Q963.500 1046 961.600 1055 L955 1050 Z" fill="#ffd43a"/>
<path d="M936.500 1047 Q937.500 1044.500 938 1045.500 Q939.500 1047.500 942.500 1047.800 L940 1052Z" fill="#ff9a1a"/>
<circle cx="949" cy="1056" r="6.600" fill="#8a3fd8"/>
<path d="M939.500 1052 Q944 1048.500 949 1049.600 Q952 1050.400 952.400 1052.500 Q949 1052.200 947.600 1054.500 Q944 1055.500 939.500 1052Z" fill="#ff9d1c"/>
<rect x="995.300" y="1044.400" width="29.700" height="20.600" rx="5" fill="#f00"/><path d="M1006.900 1050.500 L1014.600 1054.700 L1006.900 1058.900Z" fill="#fff"/>
<circle cx="1072.100" cy="1054.600" r="12.800" fill="url(#gsk)"/><circle cx="1065.200" cy="1047.600" r="6.600" fill="#00b4f0"/><circle cx="1079" cy="1061.600" r="6.600" fill="#0b7ad8"/>
<path d="M1130.200 1041.400 L1144.800 1044.600 L1140.200 1067.200 L1119.600 1060.400Z" fill="url(#gnp)"/>
<path d="M1144.800 1044.600 L1146.300 1063.500 L1140.200 1067.200Z" fill="#e8eef0"/><path d="M1145 1046 L1146.800 1046.400 L1147 1063 L1146.300 1063.500Z" fill="#c9962a"/>
<path d="M1131 1042.600 L1144 1045.400" stroke="#8a8a8a" stroke-width="1.500" stroke-dasharray="1 1" fill="none"/>
<g fill="#dd3a0c"><path d="M1422.200 1055.300 L1424.300 1054 L1427.800 1056 V1068.900 H1422.200Z"/><path d="M1429.800 1061 L1431.800 1059.800 L1435.200 1061.600 V1068.900 H1429.800Z" fill="#cf3a14"/><path d="M1437.200 1064.200 L1439.200 1063.100 L1442.800 1064.800 V1068.900 H1437.200Z" fill="#c8350f"/><path d="M1445 1066.600 Q1447.600 1065 1450.200 1066.600 V1068.900 H1445Z" fill="#c4320e"/></g>
<path d="M1424 1043 Q1431 1052.500 1445.500 1055.200" fill="none" stroke="#d9380c" stroke-width="3.300" stroke-linecap="round"/><path d="M1444.300 1048.100 L1450.200 1056.100 L1441.700 1061 L1440.400 1055.300Z" fill="#c2320f"/>
<path d="M1604.500 1059.300 L1612 1051.600 L1619.500 1059.300" fill="none" stroke="#f0f0f0" stroke-width="1.400"/>
<rect x="1633.600" y="1050.900" width="16.200" height="9.800" fill="none" stroke="#f0f0f0" stroke-width="1.200"/><rect x="1650.400" y="1053.800" width="1.600" height="4" fill="#f0f0f0"/><rect x="1635.600" y="1052.900" width="8.600" height="5.800" fill="#f0f0f0"/>
<g fill="none" stroke="#d8d8d8" stroke-width="1.300"><path d="M1666 1062.300 A14 14 0 0 1 1680 1048.500"/><path d="M1669.800 1062.300 A10.200 10.200 0 0 1 1680 1052.300"/><path d="M1673.600 1062.300 A6.400 6.400 0 0 1 1680 1056"/></g><circle cx="1678.800" cy="1061.400" r="1.600" fill="#f0f0f0"/>
<g fill="none" stroke="#f0f0f0" stroke-width="1.200"><path d="M1692.600 1052.300 H1695.600 L1699.600 1048.300 V1062.300 L1695.600 1058.300 H1692.600Z"/><path d="M1702.600 1052.300 Q1704.400 1055.300 1702.600 1058.300"/><path d="M1705.600 1050 Q1708.800 1055.300 1705.600 1060.600"/><path d="M1708.600 1047.600 Q1713.400 1055.300 1708.600 1063"/></g>
<path d="M1869.800 1045.200 H1889.600 V1059.400 H1875 L1869.800 1064Z" fill="#f2f2f2"/><path d="M1873 1049 H1886.400 M1873 1052.200 H1886.400 M1873 1055.400 H1886.400" stroke="#31312a" stroke-width="1"/>
<circle cx="1888.400" cy="1064.800" r="9.300" fill="#31312a" stroke="#9a9a9a" stroke-width="1.100"/>
</svg>
<span class="tx" id="tb1" style="left:90.00px;top:19.00px;font-size:14.60px;color:#e3e3e3;font-family:'Liberation Sans',sans-serif;letter-spacing:-0.126px;">GVenture Technology Pvt. L</span>
<span class="tx" id="tb2" style="left:356.00px;top:19.00px;font-size:14.60px;color:#e3e3e3;font-family:'Liberation Sans',sans-serif;letter-spacing:0.105px;">Bug #14047: Bug in Tariff -</span>
<span class="tx" id="tb3" style="left:622.50px;top:19.00px;font-size:14.60px;color:#e3e3e3;font-family:'Liberation Sans',sans-serif;letter-spacing:0.031px;">Campaign</span>
<span class="tx" id="tb4" style="left:889.25px;top:19.00px;font-size:14.60px;color:#f0f0f0;font-family:'Liberation Sans',sans-serif;letter-spacing:-0.180px;">Register Brand</span>
<span class="tx" id="tb5" style="left:1155.50px;top:19.00px;font-size:14.60px;color:#e3e3e3;font-family:'Liberation Sans',sans-serif;letter-spacing:-0.015px;">The Campaign Registry - Br</span>
<span class="tx" id="tb6" style="left:1421.25px;top:19.00px;font-size:14.60px;color:#e3e3e3;font-family:'Liberation Sans',sans-serif;letter-spacing:0.134px;">website name with special</span>
<span class="tx" id="url" style="left:196.50px;top:72.00px;font-size:17.00px;color:#ececec;font-family:'Liberation Sans',sans-serif;letter-spacing:0.335px;">signalmash.gventure.info/#/new-campaign/add_brand/register</span>
<span class="tx" id="lg1" style="left:88.50px;top:136.00px;font-size:24.00px;color:#fff;font-family:'Liberation Sans',sans-serif;letter-spacing:0.356px;">signal</span>
<span class="tx" id="lg2" style="left:155.00px;top:136.00px;font-size:24.00px;color:#fff;font-family:'Liberation Sans',sans-serif;letter-spacing:0.932px;font-weight:bold">mash</span>
<span class="tx" id="bc1" style="left:350.60px;top:146.00px;font-size:15.20px;color:#fff;font-family:'Liberation Sans',sans-serif;letter-spacing:0.267px;">Brand</span>
<span class="tx" id="bc2" style="left:434.40px;top:144.00px;font-size:18.00px;color:#fff;font-family:'Liberation Sans',sans-serif;letter-spacing:-0.574px;">Register Brand</span>
<span class="tx" id="bal" style="left:1505.70px;top:127.00px;font-size:15.60px;color:#fff;font-family:'Liberation Sans',sans-serif;letter-spacing:0.200px;-webkit-text-stroke:.3px #fff">$ 180.00</span>
<span class="tx" id="cb" style="left:1484.20px;top:154.00px;font-size:13.80px;color:#fff;font-family:'Liberation Sans',sans-serif;letter-spacing:-0.122px;-webkit-text-stroke:.25px #fff">Current Balance</span>
<span class="tx" id="ab" style="left:1614.40px;top:140.00px;font-size:16.00px;color:#fff;font-family:'Liberation Sans',sans-serif;letter-spacing:-0.283px;-webkit-text-stroke:.3px #fff">Add Balance</span>
<span class="tx" id="bd" style="left:1728.20px;top:134.00px;font-size:14.00px;color:#fff;font-family:'Liberation Sans',sans-serif;width:27px;text-align:center">1</span>
<span class="tx" id="m0" style="left:81.80px;top:194.00px;font-size:17.60px;color:#8f96a1;font-family:'Liberation Sans',sans-serif;letter-spacing:-0.237px;">Numbers</span>
<span class="tx" id="m1" style="left:81.80px;top:250.00px;font-size:17.60px;color:#8f96a1;font-family:'Liberation Sans',sans-serif;letter-spacing:-0.211px;">Connections</span>
<span class="tx" id="m2" style="left:81.80px;top:306.00px;font-size:17.60px;color:#8f96a1;font-family:'Liberation Sans',sans-serif;letter-spacing:-0.399px;">Voice</span>
<span class="tx" id="m3" style="left:81.80px;top:362.00px;font-size:17.60px;color:#8f96a1;font-family:'Liberation Sans',sans-serif;letter-spacing:-0.487px;">Messaging</span>
<span class="tx" id="m4" style="left:81.80px;top:419.00px;font-size:17.60px;color:#d4d7db;font-family:'Liberation Sans',sans-serif;letter-spacing:-0.530px;">A2P Campaign</span>
<span class="tx" id="m5" style="left:81.80px;top:753.00px;font-size:17.60px;color:#8f96a1;font-family:'Liberation Sans',sans-serif;letter-spacing:-0.640px;">Toll Free SMS</span>
<span class="tx" id="m6" style="left:81.80px;top:809.00px;font-size:17.60px;color:#8f96a1;font-family:'Liberation Sans',sans-serif;letter-spacing:-0.185px;">Shortcode Number</span>
<span class="tx" id="m7" style="left:81.80px;top:865.00px;font-size:17.60px;color:#8f96a1;font-family:'Liberation Sans',sans-serif;letter-spacing:0.141px;">Billing</span>
<span class="tx" id="m8" style="left:81.80px;top:921.00px;font-size:17.60px;color:#8f96a1;font-family:'Liberation Sans',sans-serif;letter-spacing:-0.630px;">API</span>
<span class="tx" id="m9" style="left:81.80px;top:978.00px;font-size:17.60px;color:#8f96a1;font-family:'Liberation Sans',sans-serif;letter-spacing:0.341px;">Notification</span>
<span class="tx" id="s0" style="left:88.00px;top:493.00px;font-size:17.60px;color:#8f96a1;font-family:'Liberation Sans',sans-serif;letter-spacing:-0.363px;">Brand</span>
<span class="tx" id="s1" style="left:88.00px;top:559.00px;font-size:17.60px;color:#8f96a1;font-family:'Liberation Sans',sans-serif;letter-spacing:-0.565px;">Campaign</span>
<span class="tx" id="s2" style="left:88.00px;top:625.00px;font-size:17.60px;color:#8f96a1;font-family:'Liberation Sans',sans-serif;letter-spacing:-0.584px;">CNP Campaign</span>
<span class="tx" id="s3" style="left:88.00px;top:691.00px;font-size:17.60px;color:#8f96a1;font-family:'Liberation Sans',sans-serif;letter-spacing:-0.300px;">CNP Setting</span>
<span class="tx" id="l00" style="left:386.25px;top:234.00px;font-size:13.00px;color:#50555c;font-family:'Liberation Sans',sans-serif;letter-spacing:0.102px;">Tax Number/ID/EIN *</span>
<span class="tx" id="v00" style="left:386.25px;top:254.00px;font-size:17.80px;color:#4d535a;font-family:'Liberation Sans',sans-serif;letter-spacing:-0.109px;">231564897988998987987</span>
<span class="tx" id="l01" style="left:1142.50px;top:234.00px;font-size:13.00px;color:#50555c;font-family:'Liberation Sans',sans-serif;letter-spacing:0.058px;">Tax Number/ID/EIN Issuing Country</span>
<span class="tx" id="v01" style="left:1142.50px;top:254.00px;font-size:17.80px;color:#1f1f1f;font-family:'Liberation Sans',sans-serif;letter-spacing:-0.183px;">Mayotte (YT)</span>
<span class="tx" id="l10" style="left:386.25px;top:342.00px;font-size:13.00px;color:#50555c;font-family:'Liberation Sans',sans-serif;letter-spacing:-0.242px;">DUNS or GIIN or LEI Number</span>
<span class="tx" id="v10" style="left:386.25px;top:363.00px;font-size:16.60px;color:#1f1f1f;font-family:'Liberation Sans',sans-serif;letter-spacing:-0.677px;">DUNS</span>
<span class="tx" id="l11" style="left:1142.50px;top:342.00px;font-size:13.00px;color:#50555c;font-family:'Liberation Sans',sans-serif;letter-spacing:-0.294px;">DUNS Number</span>
<span class="tx" id="v11" style="left:1142.50px;top:362.00px;font-size:17.80px;color:#4d535a;font-family:'Liberation Sans',sans-serif;letter-spacing:-0.061px;">56498712316549879898798765421356498798798765432132</span>
<span class="tx" id="l20" style="left:386.25px;top:450.00px;font-size:13.00px;color:#50555c;font-family:'Liberation Sans',sans-serif;letter-spacing:0.140px;">Address/Street *</span>
<span class="tx" id="v20" style="left:386.25px;top:470.00px;font-size:17.80px;color:#4d535a;font-family:'Liberation Sans',sans-serif;letter-spacing:-0.300px;">Kings vally</span>
<span class="tx" id="l21" style="left:1142.50px;top:450.00px;font-size:13.00px;color:#50555c;font-family:'Liberation Sans',sans-serif;letter-spacing:-0.113px;">City *</span>
<span class="tx" id="v21" style="left:1142.50px;top:470.00px;font-size:17.80px;color:#4d535a;font-family:'Liberation Sans',sans-serif;letter-spacing:-0.301px;">New york</span>
<span class="tx" id="l30" style="left:386.25px;top:558.00px;font-size:13.00px;color:#50555c;font-family:'Liberation Sans',sans-serif;letter-spacing:-0.084px;">State Region *</span>
<span class="tx" id="v30" style="left:386.25px;top:578.00px;font-size:17.80px;color:#4d535a;font-family:'Liberation Sans',sans-serif;letter-spacing:-0.172px;">United state</span>
<span class="tx" id="l31" style="left:1142.50px;top:558.00px;font-size:13.00px;color:#50555c;font-family:'Liberation Sans',sans-serif;letter-spacing:-0.002px;">Postal Code/ZIP Code *</span>
<span class="tx" id="v31" style="left:1142.50px;top:578.00px;font-size:17.80px;color:#4d535a;font-family:'Liberation Sans',sans-serif;letter-spacing:-0.119px;">985410</span>
<span class="tx" id="l40" style="left:386.25px;top:666.00px;font-size:13.00px;color:#50555c;font-family:'Liberation Sans',sans-serif;letter-spacing:-0.089px;">Country</span>
<span class="tx" id="v40" style="left:386.25px;top:686.00px;font-size:16.60px;color:#a3a3a3;font-family:'Liberation Sans',sans-serif;letter-spacing:-0.469px;">YT</span>
<span class="tx" id="l41" style="left:1142.50px;top:666.00px;font-size:13.00px;color:#50555c;font-family:'Liberation Sans',sans-serif;letter-spacing:-0.009px;">Website/Online Presence</span>
<span class="tx" id="v41" style="left:1142.50px;top:685.00px;font-size:17.80px;color:#4d535a;font-family:'Liberation Sans',sans-serif;letter-spacing:-0.283px;">www.kingsvally!@%.com</span>
<span class="tx" id="err" style="left:1129.50px;top:745.00px;font-size:17.40px;color:#f65a62;font-family:'Liberation Sans',sans-serif;letter-spacing:-0.012px;">Please enter valid website</span>
<span class="tx" id="p50" style="left:386.25px;top:809.00px;font-size:18.00px;color:#444a51;font-family:'Liberation Sans',sans-serif;letter-spacing:-0.331px;">Stock Symbol *</span>
<span class="tx" id="p51" style="left:1142.50px;top:809.00px;font-size:18.00px;color:#444a51;font-family:'Liberation Sans',sans-serif;letter-spacing:-0.440px;">Stock Exchange *</span>
<span class="tx" id="p60" style="left:386.25px;top:916.00px;font-size:18.00px;color:#444a51;font-family:'Liberation Sans',sans-serif;letter-spacing:-0.213px;">Vertical Type *</span>
<span class="tx" id="p61" style="left:1142.50px;top:916.00px;font-size:18.00px;color:#444a51;font-family:'Liberation Sans',sans-serif;letter-spacing:-0.642px;">Reference ID</span>
<div style="left:0;top:0;width:1920px;height:1030px;overflow:hidden"><span class="tx" id="p70" style="left:386.25px;top:1023.00px;font-size:18.00px;color:#444a51;font-family:'Liberation Sans',sans-serif;letter-spacing:-0.363px;">First Name</span></div>
<div style="left:0;top:0;width:1920px;height:1030px;overflow:hidden"><span class="tx" id="p71" style="left:1142.50px;top:1023.00px;font-size:18.00px;color:#444a51;font-family:'Liberation Sans',sans-serif;letter-spacing:-0.443px;">Last Name</span></div>
<span class="tx" id="i0" style="left:1054.40px;top:249.00px;font-size:25.20px;color:#186be6;font-family:'Liberation Serif',serif;font-style:italic;font-weight:bold">i</span>
<span class="tx" id="i1" style="left:1810.50px;top:249.00px;font-size:25.20px;color:#186be6;font-family:'Liberation Serif',serif;font-style:italic;font-weight:bold">i</span>
<span class="tx" id="i2" style="left:1054.40px;top:357.00px;font-size:25.20px;color:#186be6;font-family:'Liberation Serif',serif;font-style:italic;font-weight:bold">i</span>
<span class="tx" id="i3" style="left:1810.50px;top:357.00px;font-size:25.20px;color:#186be6;font-family:'Liberation Serif',serif;font-style:italic;font-weight:bold">i</span>
<span class="tx" id="i4" style="left:1810.50px;top:921.00px;font-size:25.20px;color:#186be6;font-family:'Liberation Serif',serif;font-style:italic;font-weight:bold">i</span>
<span class="tx" id="ts" style="left:110.75px;top:1047.00px;font-size:18.30px;color:#ececec;font-family:'Liberation Sans',sans-serif;letter-spacing:0.051px;">Type here to search</span>
<span class="tx" id="nf" style="left:1461.75px;top:1049.00px;font-size:16.60px;color:#fff;font-family:'Liberation Sans',sans-serif;letter-spacing:-0.547px;">NIFTY</span>
<span class="tx" id="np" style="left:1519.20px;top:1048.00px;font-size:17.80px;color:#f0636c;font-family:'Liberation Sans',sans-serif;letter-spacing:-0.609px;">-1.19%</span>
<span class="tx" id="eng" style="left:1725.80px;top:1050.00px;font-size:13.40px;color:#f2f2f2;font-family:'Liberation Sans',sans-serif;letter-spacing:-0.666px;">ENG</span>
<span class="tx" id="tm" style="left:1790.80px;top:1037.00px;font-size:14.20px;color:#f2f2f2;font-family:'Liberation Sans',sans-serif;letter-spacing:-0.138px;">11:22</span>
<span class="tx" id="dt" style="left:1770.30px;top:1060.00px;font-size:14.20px;color:#f2f2f2;font-family:'Liberation Sans',sans-serif;letter-spacing:0.302px;">01-04-2025</span>
<span class="tx" id="m365" style="left:633.80px;top:1062.00px;font-size:7.40px;color:#fff;font-family:'Liberation Sans',sans-serif;letter-spacing:-0.233px;font-weight:bold">M365</span>
<span class="tx" id="sk" style="left:1065.60px;top:1045.00px;font-size:20.00px;color:#fff;font-family:'Liberation Sans',sans-serif;font-weight:bold">S</span>
<span class="tx" id="nb" style="left:1885.20px;top:1060.00px;font-size:11.50px;color:#fff;font-family:'Liberation Sans',sans-serif;">1</span>
<div style="left:250px;top:12px;width:19px;height:26px;background:linear-gradient(90deg,rgba(31,32,32,0),#1f2020 85%)"></div>
<div style="left:516px;top:12px;width:17px;height:26px;background:linear-gradient(90deg,rgba(31,32,32,0),#1f2020 90%)"></div>
<div style="left:1316px;top:12px;width:21px;height:26px;background:linear-gradient(90deg,rgba(31,32,32,0),#1f2020 85%)"></div>
<div style="left:1574px;top:12px;width:21px;height:26px;background:linear-gradient(90deg,rgba(31,32,32,0),#1f2020 95%)"></div>
</div></body></html>
